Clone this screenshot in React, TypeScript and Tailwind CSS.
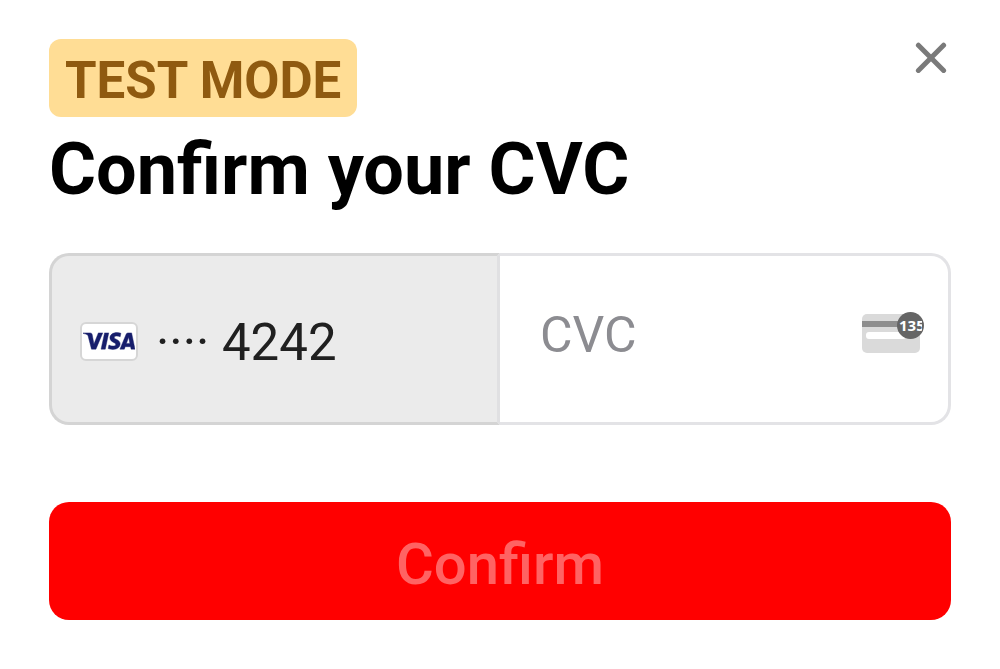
import { useState } from "react";
import { SiVisa } from "react-icons/si";

function CloseIcon() {
  return (
    <svg viewBox="0 0 32 32" className="size-8" fill="none" stroke="#7a7a7a" strokeWidth="5" strokeLinecap="round" aria-hidden="true">
      <path d="M3.4 3.2 28.6 28.4M28.6 3.2 3.4 28.4" />
    </svg>
  );
}

function VisaBadge() {
  return (
    <span className="flex h-[39px] w-[58px] shrink-0 items-center justify-center rounded-md border-2 border-[#d6d6d6] bg-white">
      <SiVisa className="size-[52px] shrink-0 stroke-[#171e6c] [stroke-width:0.2px] text-[#171e6c]" role="img" aria-label="Visa" />
    </span>
  );
}

function CvcIcon() {
  return (
    <svg viewBox="0 0 64 44" className="h-11 w-16 shrink-0" aria-hidden="true">
      <defs>
        <clipPath id="cvc-digits">
          <rect x="36" y="0" width="25" height="30" />
        </clipPath>
      </defs>
      <rect x="1" y="3" width="58" height="39" rx="5" fill="#dadada" />
      <rect x="1" y="10" width="58" height="6" fill="#8e8e8e" />
      <rect x="5" y="21" width="40" height="7" rx="3" fill="#fff" />
      <circle cx="49.5" cy="14.5" r="13.5" fill="#656565" />
      <text x="38" y="20" fill="#fff" fontSize="15" fontWeight="700" fontFamily="'Noto Sans', sans-serif" clipPath="url(#cvc-digits)">
        135
      </text>
    </svg>
  );
}

export default function App() {
  const [cvc, setCvc] = useState("");

  return (
    <main className="bg-white px-[49px] pt-[39px] pb-[49px] font-[Roboto,sans-serif] text-black">
      <header className="flex items-start justify-between">
        <div>
          <span className="flex h-[78px] w-fit items-center rounded-xl bg-[#ffdd95] px-4 pt-1.5 text-[51px] font-bold text-[#8f5a10]">
            TEST MODE
          </span>
          <h1 className="mt-[9px] text-[72px] leading-[88px] font-bold">Confirm your CVC</h1>
        </div>
        <button type="button" aria-label="Close" className="mt-[3px] mr-1">
          <CloseIcon />
        </button>
      </header>

      <form onSubmit={(event) => event.preventDefault()}>
        <div className="mt-[39px] grid h-[172px] grid-cols-2 rounded-[20px] bg-white">
          <div className="flex items-center gap-[18px] rounded-l-[20px] border-3 border-[#d4d4d4] border-r-[#e0e0e2] bg-[#ebebeb] pt-1 pl-7 text-[51px] text-[#202020]">
            <VisaBadge />
            <span className="pt-1">···· 4242</span>
          </div>
          <div className="flex items-center rounded-r-[20px] border-3 border-l-0 border-[#e3e3e6] pr-[23px] pb-3 pl-10">
            <input
              type="text"
              inputMode="numeric"
              autoComplete="cc-csc"
              aria-label="CVC"
              placeholder="CVC"
              value={cvc}
              onChange={(event) => setCvc(event.target.value)}
              className="min-w-0 flex-1 bg-transparent pt-1 text-[50px] outline-none placeholder:text-[#8c8c91]"
            />
            <CvcIcon />
          </div>
        </div>
        <button
          type="submit"
          disabled={cvc.length < 3}
          className="mt-[77px] flex h-[118px] w-full items-center justify-center rounded-[20px] bg-[#ff0000] pt-1.5 text-[58px] font-medium text-white disabled:text-[#ff6363]"
        >
          Confirm
        </button>
      </form>
    </main>
  );
}
